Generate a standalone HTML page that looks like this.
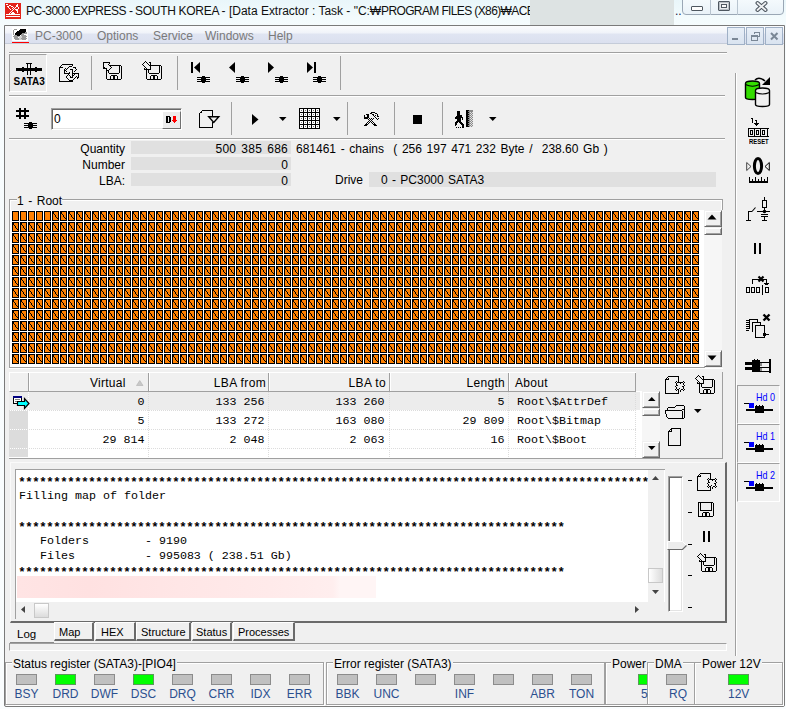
<!DOCTYPE html>
<html><head><meta charset="utf-8">
<style>
*{margin:0;padding:0;box-sizing:border-box}
html,body{width:786px;height:709px;overflow:hidden;background:#eaf6fa;font-family:"Liberation Sans",sans-serif;font-size:12px;color:#000}
.a{position:absolute}
.t{position:absolute;white-space:nowrap;line-height:1}
.hl{position:absolute;height:1px;background:#a0a0a0}
.vl{position:absolute;width:1px;background:#a0a0a0}
.wl{position:absolute;background:#fff}
.m{font-family:"Liberation Mono",monospace;font-size:11.67px;white-space:pre}
.ast{font:bold 12.5px "Liberation Sans",sans-serif;letter-spacing:2.14px;color:#000}
svg{position:absolute;overflow:visible}
.led{position:absolute;width:21px;height:11px;background:#c0c0c0;border:1px solid #8c8c8c}
.led.g{background:#00ff00;border-color:#5a9a5a}
.ll{position:absolute;color:#2b4f8f;white-space:nowrap;line-height:1;font-size:12px}
</style></head><body>
<!-- desktop/title -->
<div class="a" style="left:0;top:0;width:786px;height:709px;background:linear-gradient(#e9f6fa,#f3fbfd 18px,#f7fcfe 30px,#fafdfe)"></div>

<div class="t" style="left:26px;top:5px;color:#101010;letter-spacing:-0.49px">PC-3000 EXPRESS - </div>
<div class="t" style="left:135px;top:5px;color:#101010;letter-spacing:-0.29px">SOUTH KOREA - </div>
<div class="t" style="left:229px;top:5px;color:#101010;letter-spacing:-0.02px">[Data Extractor : Task - "C:&#8361;</div>
<div class="t" style="left:381px;top:5px;color:#101010;letter-spacing:-0.62px">PROGRAM FILES (X86)&#8361;ACE</div>
<div class="a" style="left:530px;top:0;width:144px;height:31px;background:#dde3e3"></div>
<div class="a" style="left:682px;top:-2px;width:102px;height:17px;border:1px solid #9aa7b5;border-radius:0 0 4px 4px;background:linear-gradient(#f5fafd,#e9f2f8)"></div>
<div class="vl" style="left:710px;top:0;height:15px;background:#b8c4cf"></div>
<div class="vl" style="left:737px;top:0;height:15px;background:#b8c4cf"></div>

<!-- MDI window -->
<div class="a" style="left:4px;top:25px;width:781px;height:682px;border:1px solid #7a7a7a;border-radius:0 0 2px 2px;background:#f0f0f0"></div>
<div class="a" style="left:5px;top:26px;width:779px;height:18px;background:linear-gradient(#fbfcfe 0,#f0f3f9 7px,#e0e5f2 8px,#dbe0ef 100%);border-bottom:1px solid #c5ccd9"></div>
<div class="t" style="left:35px;top:30px;color:#7a7a7a">PC-3000</div>
<div class="t" style="left:97px;top:30px;color:#7a7a7a">Options</div>
<div class="t" style="left:153px;top:30px;color:#7a7a7a">Service</div>
<div class="t" style="left:205px;top:30px;color:#7a7a7a">Windows</div>
<div class="t" style="left:268px;top:30px;color:#7a7a7a">Help</div>
<div class="a" style="left:727px;top:27px;width:18px;height:18px;border:1px solid #9fb0c6;background:linear-gradient(#e8eff8,#d9e3f0)"></div>
<div class="a" style="left:746px;top:27px;width:18px;height:18px;border:1px solid #9fb0c6;background:linear-gradient(#e8eff8,#d9e3f0)"></div>
<div class="a" style="left:765px;top:27px;width:18px;height:18px;border:1px solid #9fb0c6;background:linear-gradient(#e8eff8,#d9e3f0)"></div>

<!-- toolbar 1 -->
<div class="hl" style="left:9px;top:52px;width:718px"></div>
<div class="wl" style="left:9px;top:53px;width:718px;height:1px"></div>
<div class="a" style="left:9px;top:54px;width:38px;height:38px;border-left:1px solid #a0a0a0;border-top:1px solid #a0a0a0;border-right:1px solid #fff;border-bottom:1px solid #fff;background:#ebebeb"></div>
<div class="vl" style="left:91px;top:56px;height:34px"></div>
<div class="vl" style="left:177px;top:56px;height:34px"></div>
<div class="vl" style="left:340px;top:56px;height:34px"></div>
<div class="hl" style="left:9px;top:95px;width:716px"></div>
<div class="wl" style="left:9px;top:96px;width:716px;height:1px"></div>

<!-- toolbar 2 -->
<div class="a" style="left:51px;top:108px;width:131px;height:22px;border:1px solid #a0a0a0;border-right-color:#fff;border-bottom-color:#fff;box-shadow:inset 1px 1px 0 #696969,inset -1px -1px 0 #e3e3e3;background:#fff"></div>
<div class="t" style="left:54px;top:113px;color:#000">0</div>
<div class="a" style="left:162px;top:111px;width:19px;height:18px;border:1px solid #fff;border-right-color:#707070;border-bottom-color:#707070;background:#ececec"></div>
<div class="vl" style="left:231px;top:102px;height:33px"></div>
<div class="vl" style="left:347px;top:102px;height:33px"></div>
<div class="vl" style="left:394px;top:102px;height:33px"></div>
<div class="vl" style="left:442px;top:102px;height:33px"></div>
<div class="hl" style="left:9px;top:138px;width:716px"></div>
<div class="wl" style="left:9px;top:139px;width:716px;height:1px"></div>

<!-- info -->
<div class="a" style="left:131px;top:141px;width:160px;height:13px;background:#e0e0e0"></div>
<div class="a" style="left:131px;top:157px;width:160px;height:13px;background:#e0e0e0"></div>
<div class="a" style="left:131px;top:173px;width:160px;height:13px;background:#e0e0e0"></div>
<div class="t" style="right:661px;top:143px">Quantity</div>
<div class="t" style="right:661px;top:159px">Number</div>
<div class="t" style="right:661px;top:175px">LBA:</div>
<div class="t" style="right:498px;top:143px;word-spacing:1.5px;letter-spacing:0.25px">500 385 686</div>
<div class="t" style="right:498px;top:159px">0</div>
<div class="t" style="right:498px;top:175px">0</div>
<div class="t" style="left:296px;top:143px;word-spacing:1.3px">681461 - chains&nbsp; ( 256 197 471 232 Byte /&nbsp; 238.60 Gb )</div>
<div class="t" style="left:335px;top:174px">Drive</div>
<div class="a" style="left:369px;top:172px;width:347px;height:15px;background:#e0e0e0"></div>
<div class="t" style="left:381px;top:174px;word-spacing:1px">0 - PC3000 SATA3</div>

<!-- root group -->
<div class="hl" style="left:9px;top:199px;width:8px"></div>
<div class="hl" style="left:62px;top:199px;width:661px"></div>
<div class="wl" style="left:10px;top:200px;width:7px;height:1px"></div>
<div class="wl" style="left:62px;top:200px;width:660px;height:1px"></div>
<div class="vl" style="left:9px;top:199px;height:169px"></div>
<div class="wl" style="left:10px;top:200px;width:1px;height:167px"></div>
<div class="vl" style="left:722px;top:199px;height:11px"></div>
<div class="wl" style="left:721px;top:200px;width:1px;height:10px"></div>
<div class="hl" style="left:9px;top:367px;width:696px"></div>
<div class="wl" style="left:9px;top:368px;width:714px;height:1px"></div>
<div class="t" style="left:17px;top:195px;word-spacing:1.2px">1 - Root</div>
<div class="a" style="left:10px;top:210px;width:694px;height:157px;background:#fff"></div>
<svg style="left:12px;top:211px" width="688" height="154" shape-rendering="crispEdges">
<defs>
<pattern id="c" x="0" y="0" width="8" height="11" patternUnits="userSpaceOnUse">
<rect x="0" y="0" width="7" height="10" fill="#000"/>
<rect x="1" y="1" width="5" height="8" fill="#ff8000"/>
<rect x="1" y="1" width="1" height="2" fill="#000"/>
<rect x="2" y="3" width="1" height="1" fill="#000"/>
<rect x="3" y="4" width="1" height="2" fill="#000"/>
<rect x="4" y="6" width="1" height="1" fill="#000"/>
<rect x="5" y="7" width="1" height="1" fill="#000"/>
</pattern>
</defs>
<rect x="0" y="0" width="688" height="154" fill="url(#c)"/>
<rect x="1" y="1" width="5" height="8" fill="#ff8000"/>
<rect x="9" y="1" width="5" height="8" fill="#ff8000"/>
<rect x="17" y="1" width="5" height="8" fill="#ff8000"/>
<rect x="25" y="1" width="5" height="8" fill="#ff8000"/>
<rect x="33" y="1" width="5" height="8" fill="#ff8000"/>
</svg>
<!-- grid scrollbar -->
<div class="a" style="left:704px;top:210px;width:18px;height:157px;background:#f6f6f6"></div>
<div class="a" style="left:704px;top:210px;width:18px;height:17px;border:1px solid #f0f0f0;border-right-color:#696969;border-bottom-color:#696969;box-shadow:inset 1px 1px 0 #fff,inset -1px -1px 0 #a0a0a0;background:#f0f0f0"></div>
<div class="a" style="left:704px;top:227px;width:18px;height:8px;border:1px solid #f0f0f0;border-right-color:#696969;border-bottom-color:#696969;box-shadow:inset 1px 1px 0 #fff,inset -1px -1px 0 #a0a0a0;background:#f0f0f0"></div>
<div class="a" style="left:704px;top:350px;width:18px;height:17px;border:1px solid #f0f0f0;border-right-color:#696969;border-bottom-color:#696969;box-shadow:inset 1px 1px 0 #fff,inset -1px -1px 0 #a0a0a0;background:#f0f0f0"></div>

<!-- table -->
<div class="a" style="left:9px;top:391px;width:633px;height:67px;background:#fff"></div>
<div class="a" style="left:9px;top:372px;width:627px;height:20px;background:#f0f0f0;border-top:1px solid #fff;border-left:1px solid #fff;border-bottom:1px solid #a0a0a0"></div>
<div class="vl" style="left:28px;top:373px;height:18px"></div><div class="wl" style="left:29px;top:373px;width:1px;height:18px"></div>
<div class="vl" style="left:148px;top:373px;height:18px"></div><div class="wl" style="left:149px;top:373px;width:1px;height:18px"></div>
<div class="vl" style="left:268px;top:373px;height:18px"></div><div class="wl" style="left:269px;top:373px;width:1px;height:18px"></div>
<div class="vl" style="left:389px;top:373px;height:18px"></div><div class="wl" style="left:390px;top:373px;width:1px;height:18px"></div>
<div class="vl" style="left:508px;top:373px;height:18px"></div><div class="wl" style="left:509px;top:373px;width:1px;height:18px"></div>
<div class="vl" style="left:635px;top:373px;height:19px"></div>
<div class="t" style="left:90px;top:377px;letter-spacing:0.25px">Virtual</div>
<svg style="left:136px;top:380px" width="8" height="6"><path d="M0.5 5.5L3.75 0.5 7 5.5Z" fill="#c8c8c8" stroke="#b0b0b0" stroke-width="0.6"/></svg>
<div class="t" style="right:520px;top:377px;letter-spacing:0.35px">LBA from</div>
<div class="t" style="right:400px;top:377px;letter-spacing:0.35px">LBA to</div>
<div class="t" style="right:281px;top:377px;letter-spacing:0.3px">Length</div>
<div class="t" style="left:515px;top:377px;letter-spacing:0.3px">About</div>
<div class="a" style="left:9px;top:392px;width:631px;height:18px;background:#ececec"></div>
<div class="a" style="left:9px;top:411px;width:19px;height:18px;background:#dcdcdc"></div>
<div class="a" style="left:9px;top:430px;width:19px;height:18px;background:#dcdcdc"></div>
<div class="a" style="left:9px;top:449px;width:19px;height:8px;background:#dcdcdc"></div>
<div class="a" style="left:9px;top:410px;width:627px;height:1px;background:repeating-linear-gradient(90deg,#dcdcdc 0 1px,transparent 1px 2px)"></div>
<div class="a" style="left:9px;top:429px;width:627px;height:1px;background:repeating-linear-gradient(90deg,#dcdcdc 0 1px,transparent 1px 2px)"></div>
<div class="a" style="left:9px;top:448px;width:627px;height:1px;background:repeating-linear-gradient(90deg,#dcdcdc 0 1px,transparent 1px 2px)"></div>
<div class="a" style="left:148px;top:392px;width:1px;height:65px;background:repeating-linear-gradient(#dcdcdc 0 1px,transparent 1px 2px)"></div>
<div class="a" style="left:268px;top:392px;width:1px;height:65px;background:repeating-linear-gradient(#dcdcdc 0 1px,transparent 1px 2px)"></div>
<div class="a" style="left:389px;top:392px;width:1px;height:65px;background:repeating-linear-gradient(#dcdcdc 0 1px,transparent 1px 2px)"></div>
<div class="a" style="left:508px;top:392px;width:1px;height:65px;background:repeating-linear-gradient(#dcdcdc 0 1px,transparent 1px 2px)"></div>
<div class="a" style="left:635px;top:392px;width:1px;height:65px;background:repeating-linear-gradient(#dcdcdc 0 1px,transparent 1px 2px)"></div>
<div class="a" style="left:28px;top:392px;width:1px;height:65px;background:repeating-linear-gradient(#fff 0 1px,transparent 1px 2px)"></div>
<div class="hl" style="left:9px;top:458px;width:714px"></div><div class="vl" style="left:722px;top:372px;height:87px"></div>
<!-- row indicator -->
<svg style="left:13px;top:396px" width="17" height="13" shape-rendering="crispEdges">
<rect x="0" y="0" width="9" height="8" fill="#000"/>
<rect x="0" y="0" width="9" height="2" fill="#000080"/>
<rect x="1" y="2" width="7" height="5" fill="#fff"/>
<rect x="2" y="3" width="5" height="1" fill="#808080"/>
<rect x="2" y="5" width="3" height="1" fill="#808080"/>
<path d="M4.5 5.5H11.5V2.5L16 7.5 11.5 12.5V9.5H4.5Z" fill="#00ffff" stroke="#000" stroke-width="1.2" shape-rendering="auto"/>
</svg>
<!-- table rows -->
<div class="t m" style="right:641.5px;top:397px">0</div>
<div class="t m" style="right:521.5px;top:397px">133 256</div>
<div class="t m" style="right:401.5px;top:397px">133 260</div>
<div class="t m" style="right:281.5px;top:397px">5</div>
<div class="t m" style="left:517px;top:397px">Root\$AttrDef</div>
<div class="t m" style="right:641.5px;top:416px">5</div>
<div class="t m" style="right:521.5px;top:416px">133 272</div>
<div class="t m" style="right:401.5px;top:416px">163 080</div>
<div class="t m" style="right:281.5px;top:416px">29 809</div>
<div class="t m" style="left:517px;top:416px">Root\$Bitmap</div>
<div class="t m" style="right:641.5px;top:435px">29 814</div>
<div class="t m" style="right:521.5px;top:435px">2 048</div>
<div class="t m" style="right:401.5px;top:435px">2 063</div>
<div class="t m" style="right:281.5px;top:435px">16</div>
<div class="t m" style="left:517px;top:435px">Root\$Boot</div>
<!-- table scrollbar -->
<div class="a" style="left:642px;top:391px;width:18px;height:67px;background:#f6f6f6"></div>
<div class="a" style="left:642px;top:391px;width:18px;height:17px;border:1px solid #f0f0f0;border-right-color:#696969;border-bottom-color:#696969;box-shadow:inset 1px 1px 0 #fff,inset -1px -1px 0 #a0a0a0;background:#f0f0f0"></div>
<div class="a" style="left:642px;top:408px;width:18px;height:8px;border:1px solid #f0f0f0;border-right-color:#696969;border-bottom-color:#696969;box-shadow:inset 1px 1px 0 #fff,inset -1px -1px 0 #a0a0a0;background:#f0f0f0"></div>
<div class="a" style="left:642px;top:441px;width:18px;height:17px;border:1px solid #f0f0f0;border-right-color:#696969;border-bottom-color:#696969;box-shadow:inset 1px 1px 0 #fff,inset -1px -1px 0 #a0a0a0;background:#f0f0f0"></div>

<!-- log panel -->
<div class="a" style="left:10px;top:462px;width:717px;height:161px;border:1px solid #fafafa;border-right:2px solid #6a6a6a;border-bottom:2px solid #6a6a6a"></div>
<div class="a" style="left:15px;top:469px;width:650px;height:150px;border-left:1px solid #a0a0a0;border-top:1px solid #a0a0a0;background:#fff"></div>
<div class="a" style="left:17px;top:576px;width:359px;height:22px;background:linear-gradient(90deg,#ffe4e4 0,#ffe1e1 20%,#ffe6e6 45%,#ffeaea 70%,#ffeeee 88%,#fff5f5 90%,#fff5f5 100%)"></div>
<div class="a" style="left:16px;top:470px;width:632px;height:132px;overflow:hidden">
<div class="t ast" style="left:3.5px;top:5px">********************************************************************************************</div>
<div class="t m" style="left:3px;top:21px">Filling map of folder</div>
<div class="t ast" style="left:3.5px;top:50px">******************************************************************************</div>
<div class="t m" style="left:3px;top:66px">   Folders        - 9190</div>
<div class="t m" style="left:3px;top:81px">   Files          - 995083 ( 238.51 Gb)</div>
<div class="t ast" style="left:3.5px;top:95px">******************************************************************************</div>
</div>
<!-- log vscroll -->
<div class="a" style="left:648px;top:470px;width:16px;height:132px;background:#f0f0f0"></div>
<div class="a" style="left:648px;top:568px;width:15px;height:15px;border:1px solid #c8c8c8;background:linear-gradient(90deg,#fff,#dcdcdc)"></div>
<!-- log hscroll -->
<div class="a" style="left:16px;top:602px;width:632px;height:17px;background:#f0f0f0"></div>
<div class="a" style="left:34px;top:603px;width:15px;height:15px;border:1px solid #c8c8c8;background:linear-gradient(#fff,#dcdcdc)"></div>
<div class="a" style="left:648px;top:602px;width:17px;height:17px;background:#f0f0f0"></div>
<!-- slider -->
<div class="a" style="left:668px;top:476px;width:15px;height:136px;border:1px solid #a0a0a0;border-right-color:#fff;border-bottom-color:#fff;box-shadow:inset 1px 1px 0 #696969,inset -1px -1px 0 #e3e3e3;background:#fff"></div>

<!-- tabs -->
<div class="hl" style="left:10px;top:642px;width:44px;background:#8a8a8a"></div>
<div class="a" style="left:54px;top:622px;width:40px;height:19px;border:1px solid #fff;border-right:2px solid #6a6a6a;border-bottom:2px solid #6a6a6a;background:#f0f0f0"></div>
<div class="a" style="left:95px;top:622px;width:41px;height:19px;border:1px solid #fff;border-right:2px solid #6a6a6a;border-bottom:2px solid #6a6a6a;background:#f0f0f0"></div>
<div class="a" style="left:136px;top:622px;width:55px;height:19px;border:1px solid #fff;border-right:2px solid #6a6a6a;border-bottom:2px solid #6a6a6a;background:#f0f0f0"></div>
<div class="a" style="left:192px;top:622px;width:40px;height:19px;border:1px solid #fff;border-right:2px solid #6a6a6a;border-bottom:2px solid #6a6a6a;background:#f0f0f0"></div>
<div class="a" style="left:233px;top:622px;width:62px;height:19px;border:1px solid #fff;border-right:2px solid #6a6a6a;border-bottom:2px solid #6a6a6a;background:#f0f0f0"></div>
<div class="t" style="left:17px;top:629px;font-size:11.5px">Log</div>
<div class="t" style="left:59px;top:627px;font-size:11px">Map</div>
<div class="t" style="left:101px;top:627px;font-size:11px">HEX</div>
<div class="t" style="left:141px;top:627px;font-size:11px">Structure</div>
<div class="t" style="left:196px;top:627px;font-size:11px">Status</div>
<div class="t" style="left:238px;top:627px;font-size:11px">Processes</div>
<div class="a" style="left:9px;top:643px;width:718px;height:8px;border-top:1px solid #a0a0a0;border-left:1px solid #a0a0a0;border-bottom:1px solid #fff;border-right:1px solid #fff"></div>

<!-- right toolbar -->
<div class="vl" style="left:735px;top:73px;height:583px"></div>
<div class="wl" style="left:736px;top:73px;width:1px;height:583px"></div>
<div class="a" style="left:737px;top:385px;width:43px;height:39px;border:1px solid #a0a0a0;border-right-color:#fff;border-bottom-color:#fff"></div>
<div class="a" style="left:737px;top:424px;width:43px;height:39px;border:1px solid #a0a0a0;border-right-color:#fff;border-bottom-color:#fff"></div>
<div class="a" style="left:737px;top:463px;width:43px;height:39px;border:1px solid #a0a0a0;border-right-color:#fff;border-bottom-color:#fff"></div>
<div class="t" style="left:756px;top:392px;font-size:10.5px;transform:scaleX(0.86);transform-origin:0 0;color:#0000ff">Hd 0</div>
<div class="t" style="left:756px;top:431px;font-size:10.5px;transform:scaleX(0.86);transform-origin:0 0;color:#0000ff">Hd 1</div>
<div class="t" style="left:756px;top:470px;font-size:10.5px;transform:scaleX(0.86);transform-origin:0 0;color:#0000ff">Hd 2</div>

<!-- status bar -->

<div class="a" style="left:5px;top:662px;width:319px;height:43px;border:1px solid #a0a0a0;border-right-color:#a0a0a0;box-shadow:inset 1px 1px 0 #fff,1px 1px 0 #fff"></div>
<div class="a" style="left:12px;top:658px;height:12px;padding:0 1px;background:#f0f0f0;line-height:12px" ><span style="position:relative;top:0">Status register (SATA3)-[PIO4]</span></div>
<div class="a" style="left:326px;top:662px;width:279px;height:43px;border:1px solid #a0a0a0;box-shadow:inset 1px 1px 0 #fff,1px 1px 0 #fff"></div>
<div class="a" style="left:333px;top:658px;height:12px;padding:0 1px;background:#f0f0f0;line-height:12px">Error register (SATA3)</div>
<div class="a" style="left:605px;top:662px;width:43px;height:43px;border:1px solid #a0a0a0;box-shadow:inset 1px 1px 0 #fff,1px 1px 0 #fff"></div>
<div class="a" style="left:647px;top:662px;width:48px;height:43px;border:1px solid #a0a0a0;box-shadow:inset 1px 1px 0 #fff,1px 1px 0 #fff"></div>
<div class="a" style="left:694px;top:662px;width:89px;height:43px;border:1px solid #a0a0a0;box-shadow:inset 1px 1px 0 #fff,1px 1px 0 #fff"></div>
<div class="a" style="left:611px;top:658px;height:12px;padding:0 1px;background:#f0f0f0;line-height:12px">Power</div>
<div class="a" style="left:654px;top:658px;height:12px;padding:0 1px;background:#f0f0f0;line-height:12px">DMA</div>
<div class="a" style="left:701px;top:658px;height:12px;padding:0 1px;background:#f0f0f0;line-height:12px">Power 12V</div>
<div class="led" style="left:16px;top:674px"></div>
<div class="ll" style="left:6px;top:688px;width:41px;text-align:center">BSY</div>
<div class="led g" style="left:55px;top:674px"></div>
<div class="ll" style="left:45px;top:688px;width:41px;text-align:center">DRD</div>
<div class="led" style="left:94px;top:674px"></div>
<div class="ll" style="left:84px;top:688px;width:41px;text-align:center">DWF</div>
<div class="led g" style="left:133px;top:674px"></div>
<div class="ll" style="left:123px;top:688px;width:41px;text-align:center">DSC</div>
<div class="led" style="left:172px;top:674px"></div>
<div class="ll" style="left:162px;top:688px;width:41px;text-align:center">DRQ</div>
<div class="led" style="left:211px;top:674px"></div>
<div class="ll" style="left:201px;top:688px;width:41px;text-align:center">CRR</div>
<div class="led" style="left:250px;top:674px"></div>
<div class="ll" style="left:240px;top:688px;width:41px;text-align:center">IDX</div>
<div class="led" style="left:289px;top:674px"></div>
<div class="ll" style="left:279px;top:688px;width:41px;text-align:center">ERR</div>
<div class="led" style="left:337px;top:674px"></div>
<div class="ll" style="left:327px;top:688px;width:41px;text-align:center">BBK</div>
<div class="led" style="left:376px;top:674px"></div>
<div class="ll" style="left:366px;top:688px;width:41px;text-align:center">UNC</div>
<div class="led" style="left:415px;top:674px"></div>
<div class="led" style="left:454px;top:674px"></div>
<div class="ll" style="left:444px;top:688px;width:41px;text-align:center">INF</div>
<div class="led" style="left:493px;top:674px"></div>
<div class="led" style="left:532px;top:674px"></div>
<div class="ll" style="left:522px;top:688px;width:41px;text-align:center">ABR</div>
<div class="led" style="left:571px;top:674px"></div>
<div class="ll" style="left:561px;top:688px;width:41px;text-align:center">TON</div>
<div class="led g" style="left:638px;top:674px;width:9px;border-right:none"></div>
<div class="ll" style="left:641px;top:688px">5</div>
<div class="led" style="left:666px;top:674px"></div>
<div class="ll" style="left:669px;top:688px">RQ</div>
<div class="led g" style="left:728px;top:674px"></div>
<div class="ll" style="left:728px;top:688px">12V</div>

<!-- ===== ICONS ===== -->
<!-- title icon -->
<svg style="left:5px;top:3px" width="16" height="16" shape-rendering="crispEdges"><rect width="16" height="16" fill="#e3241b"/><path d="M1 1h2v1h-2zM12 1h1v1h-1zM4 2h2v1h-2zM11 2h2v1h-2zM2 3h2v1h-2zM6 3h2v1h-2zM11 3h2v1h-2zM3 4h1v1h-1zM8 4h1v1h-1zM10 4h1v1h-1zM13 4h1v1h-1zM4 5h1v1h-1zM7 5h1v1h-1zM9 5h1v1h-1zM13 5h1v1h-1zM5 6h1v1h-1zM8 6h1v1h-1zM10 6h3v1h-3zM7 7h1v1h-1zM11 7h2v1h-2zM6 8h1v1h-1zM12 8h1v1h-1zM5 9h1v1h-1zM7 9h2v1h-2zM12 9h1v1h-1zM4 10h1v1h-1zM6 10h4v1h-4zM1 11h14v1h-14zM1 13h14v1h-14z" fill="#fff"/></svg>
<!-- menu icon -->
<svg style="left:12px;top:27px" width="17" height="17" shape-rendering="crispEdges"><rect x="0" y="0" width="16" height="14" fill="#fff"/><path d="M2 2h3v1h-3zM1 3h1v1h-1zM1 4h1v1h-1zM1 5h1v1h-1zM13 5h2v1h-2zM1 6h1v1h-1zM10 6h5v1h-5zM1 7h1v1h-1zM9 7h3v1h-3zM2 8h3v1h-3zM9 8h5v1h-5zM1 9h6v1h-6zM10 9h5v1h-5zM2 10h4v1h-4zM10 10h4v1h-4zM2 11h5v1h-5zM9 11h6v1h-6zM3 12h4v1h-4zM10 12h4v1h-4z" fill="#9a9a9a"/><path d="M7 9h3v1h-3zM7 10h3v1h-3zM7 11h2v1h-2zM7 12h3v1h-3z" fill="#d0d0d0"/><path d="M8 2h6v1h-6zM7 3h7v1h-7zM5 4h9v1h-9zM4 5h9v1h-9zM3 6h7v1h-7zM3 7h6v1h-6zM5 8h3v1h-3z" fill="#000"/><rect x="0" y="15" width="17" height="1" fill="#f00"/></svg>
<!-- caption buttons glyphs -->
<div class="a" style="left:691px;top:6px;width:12px;height:5px;border:1px solid #4e5760;border-radius:1px;background:#fdfdfd"></div>
<div class="a" style="left:718px;top:1px;width:12px;height:10px;border:1px solid #4e5760;border-radius:1px;background:#e8eaec;box-shadow:inset 0 0 0 1px #b8bec4"></div>
<div class="a" style="left:721px;top:4px;width:6px;height:4px;border:1px solid #4e5760;background:#fafafa"></div>
<svg style="left:755px;top:1px" width="13" height="11"><path d="M2.5 2L10.5 9M10.5 2L2.5 9" stroke="#4e5760" stroke-width="4" stroke-linecap="round"/><path d="M2.5 2L10.5 9M10.5 2L2.5 9" stroke="#eef0f2" stroke-width="1.8" stroke-linecap="round"/></svg>
<div class="t" style="left:675px;top:5px;font-size:12px;color:#224">..</div>
<!-- MDI glyphs -->
<div class="a" style="left:732px;top:38px;width:6px;height:2px;background:#7a8796"></div>
<svg style="left:746px;top:27px" width="18" height="18" shape-rendering="crispEdges"><path d="M8 5h6v1h-6zM8 6h1v1h-1zM13 6h1v4h-1zM12 9h1v1h-1zM5 8h7v2H5zM5 10h1v4H5zM11 10h1v4h-1zM5 13h7v1H5z" fill="#7a8796"/></svg>
<svg style="left:765px;top:27px" width="18" height="18"><path d="M6 6L12.5 12.5M12.5 6L6 12.5" stroke="#7a8796" stroke-width="2"/></svg>

<!-- SATA3 -->
<svg style="left:9px;top:54px" width="38" height="38" shape-rendering="crispEdges">
<rect x="7" y="14" width="26" height="3" fill="#000"/>
<rect x="13" y="13" width="2" height="5" fill="#000"/>
<rect x="26" y="13" width="2" height="5" fill="#000"/>
<rect x="18" y="9" width="1" height="12" fill="#000"/>
<rect x="21" y="9" width="1" height="12" fill="#000"/>
<rect x="17" y="9" width="6" height="1" fill="#000"/>
</svg>
<div class="t" style="left:13.5px;top:77px;font-size:10px;font-weight:bold;letter-spacing:0px;color:#000">SATA3</div>
<!-- refresh doc -->
<svg style="left:57px;top:61px" width="24" height="24" shape-rendering="crispEdges"><path d="M5 3h11v1h-11zM4 4h1v1h-1zM15 4h1v1h-1zM3 5h1v1h-1zM12 5h3v1h-3zM2 6h4v1h-4zM11 6h1v1h-1zM16 6h3v1h-3zM2 7h1v1h-1zM8 7h1v1h-1zM10 7h1v1h-1zM18 7h1v1h-1zM2 8h1v1h-1zM7 8h1v1h-1zM9 8h1v1h-1zM13 8h3v1h-3zM19 8h1v1h-1zM2 9h1v1h-1zM7 9h2v1h-2zM15 9h1v1h-1zM18 9h1v1h-1zM2 10h1v1h-1zM7 10h1v1h-1zM9 10h1v1h-1zM15 10h1v1h-1zM17 10h1v1h-1zM2 11h1v1h-1zM7 11h1v1h-1zM12 11h1v1h-1zM15 11h1v1h-1zM2 12h1v1h-1zM7 12h6v1h-6zM15 12h7v1h-7zM2 13h1v1h-1zM11 13h1v1h-1zM15 13h1v1h-1zM17 13h1v1h-1zM21 13h1v1h-1zM2 14h1v1h-1zM10 14h1v1h-1zM12 14h1v1h-1zM15 14h2v1h-2zM21 14h1v1h-1zM2 15h1v1h-1zM9 15h1v1h-1zM13 15h1v1h-1zM15 15h1v1h-1zM19 15h1v1h-1zM21 15h1v1h-1zM2 16h1v1h-1zM9 16h1v1h-1zM13 16h3v1h-3zM18 16h1v1h-1zM20 16h2v1h-2zM2 17h1v1h-1zM10 17h1v1h-1zM17 17h1v1h-1zM20 17h1v1h-1zM2 18h1v1h-1zM11 18h1v1h-1zM16 18h1v1h-1zM2 19h1v1h-1zM12 19h4v1h-4zM2 20h14v1h-14z" fill="#000"/></svg>
<!-- save1 -->
<svg style="left:100px;top:60px" width="26" height="22" shape-rendering="crispEdges"><path d="M9 5h12v1h-12zM3 5h1v1h-1zM9 5h1v1h-1zM21 6h1v1h-1zM19 6h1v1h-1zM3 6h1v1h-1zM10 6h1v1h-1zM21 7h1v1h-1zM19 7h1v1h-1zM3 7h1v1h-1zM11 7h1v1h-1zM4 7h1v1h-1zM21 8h1v1h-1zM6 8h1v1h-1zM19 8h1v1h-1zM3 8h1v1h-1zM4 8h1v1h-1zM5 8h1v1h-1zM10 8h1v1h-1zM21 9h1v1h-1zM6 9h1v1h-1zM19 9h1v1h-1zM6 9h1v1h-1zM9 9h1v1h-1zM21 10h1v1h-1zM6 10h1v1h-1zM19 10h1v1h-1zM8 10h1v1h-1zM7 10h1v1h-1zM8 10h1v1h-1zM21 11h1v1h-1zM6 11h1v1h-1zM19 11h1v1h-1zM8 11h1v1h-1zM21 12h1v1h-1zM6 12h1v1h-1zM19 12h1v1h-1zM8 12h1v1h-1zM21 13h1v1h-1zM6 13h1v1h-1zM9 13h10v1h-10zM21 14h1v1h-1zM6 14h1v1h-1zM21 15h1v1h-1zM6 15h1v1h-1zM11 15h6v1h-6zM21 16h1v1h-1zM6 16h1v1h-1zM10 16h1v1h-1zM13 16h2v1h-2zM17 16h1v1h-1zM21 17h1v1h-1zM6 17h1v1h-1zM10 17h1v1h-1zM13 17h2v1h-2zM17 17h1v1h-1zM21 18h1v1h-1zM6 18h1v1h-1zM10 18h1v1h-1zM13 18h2v1h-2zM17 18h1v1h-1zM7 19h14v1h-14zM3 2h7v1h-7zM3 3h1v1h-1zM9 3h1v1h-1zM3 4h1v1h-1zM8 4h1v1h-1z" fill="#000"/></svg>
<!-- save2 -->
<svg style="left:140px;top:60px" width="26" height="22" shape-rendering="crispEdges"><path d="M10 5h11v1h-11zM10 5h1v1h-1zM9 5h1v1h-1zM3 5h1v1h-1zM21 6h1v1h-1zM19 6h1v1h-1zM10 6h1v1h-1zM4 6h1v1h-1zM21 7h1v1h-1zM19 7h1v1h-1zM10 7h1v1h-1zM5 7h1v1h-1zM21 8h1v1h-1zM19 8h1v1h-1zM10 8h1v1h-1zM4 8h1v1h-1zM6 8h1v1h-1zM21 9h1v1h-1zM19 9h1v1h-1zM10 9h1v1h-1zM4 9h7v1h-7zM21 10h1v1h-1zM6 10h1v1h-1zM19 10h1v1h-1zM8 10h1v1h-1zM21 11h1v1h-1zM6 11h1v1h-1zM19 11h1v1h-1zM8 11h1v1h-1zM21 12h1v1h-1zM6 12h1v1h-1zM19 12h1v1h-1zM8 12h1v1h-1zM21 13h1v1h-1zM6 13h1v1h-1zM9 13h10v1h-10zM21 14h1v1h-1zM6 14h1v1h-1zM21 15h1v1h-1zM6 15h1v1h-1zM11 15h6v1h-6zM21 16h1v1h-1zM6 16h1v1h-1zM10 16h1v1h-1zM13 16h2v1h-2zM17 16h1v1h-1zM21 17h1v1h-1zM6 17h1v1h-1zM10 17h1v1h-1zM13 17h2v1h-2zM17 17h1v1h-1zM21 18h1v1h-1zM6 18h1v1h-1zM10 18h1v1h-1zM13 18h2v1h-2zM17 18h1v1h-1zM7 19h14v1h-14zM10 3h1v1h-1zM7 3h1v1h-1zM3 3h1v1h-1zM10 4h1v1h-1zM8 4h1v1h-1zM2 4h1v1h-1zM9 2h2v1h-2zM6 2h1v1h-1zM4 2h1v1h-1zM5 1h1v1h-1z" fill="#000"/></svg>
<svg style="left:191px;top:62px" width="10" height="11"><rect x="0" y="0" width="2" height="11" fill="#000"/><path d="M9 0V11L3 5.5Z" fill="#000"/></svg>
<svg style="left:197px;top:76px" width="14" height="8" shape-rendering="crispEdges"><path d="M0 1h13v1H0zM0 3h13v1H0zM0 5h13v1H0zM5 0h3v7H5zM4 1h5v5H4z" fill="#000"/></svg>
<svg style="left:228px;top:62px" width="8" height="11"><path d="M7 0V11L1 5.5Z" fill="#000"/></svg>
<svg style="left:236px;top:76px" width="14" height="8" shape-rendering="crispEdges"><path d="M0 1h13v1H0zM0 3h13v1H0zM0 5h13v1H0zM5 0h3v7H5zM4 1h5v5H4z" fill="#000"/></svg>
<svg style="left:268px;top:62px" width="8" height="11"><path d="M0 0V11L6 5.5Z" fill="#000"/></svg>
<svg style="left:275px;top:76px" width="14" height="8" shape-rendering="crispEdges"><path d="M0 1h13v1H0zM0 3h13v1H0zM0 5h13v1H0zM5 0h3v7H5zM4 1h5v5H4z" fill="#000"/></svg>
<svg style="left:307px;top:62px" width="10" height="11"><path d="M0 0V11L6 5.5Z" fill="#000"/><rect x="7" y="0" width="2" height="11" fill="#000"/></svg>
<svg style="left:313px;top:76px" width="14" height="8" shape-rendering="crispEdges"><path d="M0 1h13v1H0zM0 3h13v1H0zM0 5h13v1H0zM5 0h3v7H5zM4 1h5v5H4z" fill="#000"/></svg>

<!-- # icon -->
<svg style="left:16px;top:108px" width="13" height="11" shape-rendering="crispEdges"><path d="M3 0h2v11H3zM8 0h2v11H8zM0 2h13v2H0zM0 7h13v2H0z" fill="#000"/></svg>
<svg style="left:24px;top:122px" width="14" height="8" shape-rendering="crispEdges"><path d="M0 1h13v1H0zM0 3h13v1H0zM0 5h13v1H0zM5 0h3v7H5zM4 1h5v5H4z" fill="#000"/></svg>

<!-- D arrow -->
<svg style="left:166px;top:116px" width="12" height="8" shape-rendering="crispEdges"><path d="M0 0h4v1H0zM0 6h4v1H0zM0 1h2v5H0zM3 1h2v5H3z" fill="#000"/><path d="M7 0h3v4H7zM6 4h5v1H6zM7 5h3v1H7zM8 6h1v1H8z" fill="#f00"/></svg>
<!-- filter doc -->
<svg style="left:199px;top:110px" width="21" height="18" shape-rendering="crispEdges">
<path d="M3 0h11v1H3zM2 1h1v1H2zM1 2h1v1H1zM0 3h1v15H0zM0 17h14v1H0zM13 0h1v7h-1zM13 12h1v6h-1zM2 2h1v1H2z" fill="#000"/>
</svg>
<svg style="left:208px;top:116px" width="12" height="8"><path d="M0.7 0.7H10.8L5.75 6.5Z" fill="none" stroke="#000" stroke-width="1.4"/></svg>
<!-- play & dropdowns -->
<svg style="left:252px;top:114px" width="7" height="11"><path d="M0 0V11L6.5 5.5Z" fill="#000"/></svg>
<svg style="left:279px;top:117px" width="8" height="4"><path d="M0 0H7.5L3.75 4Z" fill="#000"/></svg>
<svg style="left:333px;top:117px" width="8" height="4"><path d="M0 0H7.5L3.75 4Z" fill="#000"/></svg>
<svg style="left:489px;top:117px" width="8" height="4"><path d="M0 0H7.5L3.75 4Z" fill="#000"/></svg>
<!-- grid icon -->
<svg style="left:299px;top:108px" width="21" height="21" shape-rendering="crispEdges">
<rect width="21" height="21" fill="#000"/>
<rect x="1" y="1" width="3" height="3" fill="#fff"/><rect x="2" y="2" width="1" height="1" fill="#777"/><rect x="1" y="5" width="3" height="3" fill="#fff"/><rect x="2" y="6" width="1" height="1" fill="#777"/><rect x="1" y="9" width="3" height="3" fill="#fff"/><rect x="2" y="10" width="1" height="1" fill="#777"/><rect x="1" y="13" width="3" height="3" fill="#fff"/><rect x="2" y="14" width="1" height="1" fill="#777"/><rect x="1" y="17" width="3" height="3" fill="#fff"/><rect x="2" y="18" width="1" height="1" fill="#777"/><rect x="5" y="1" width="3" height="3" fill="#fff"/><rect x="6" y="2" width="1" height="1" fill="#777"/><rect x="5" y="5" width="3" height="3" fill="#fff"/><rect x="6" y="6" width="1" height="1" fill="#777"/><rect x="5" y="9" width="3" height="3" fill="#fff"/><rect x="6" y="10" width="1" height="1" fill="#777"/><rect x="5" y="13" width="3" height="3" fill="#fff"/><rect x="6" y="14" width="1" height="1" fill="#777"/><rect x="5" y="17" width="3" height="3" fill="#fff"/><rect x="6" y="18" width="1" height="1" fill="#777"/><rect x="9" y="1" width="3" height="3" fill="#fff"/><rect x="10" y="2" width="1" height="1" fill="#777"/><rect x="9" y="5" width="3" height="3" fill="#fff"/><rect x="10" y="6" width="1" height="1" fill="#777"/><rect x="9" y="9" width="3" height="3" fill="#fff"/><rect x="10" y="10" width="1" height="1" fill="#777"/><rect x="9" y="13" width="3" height="3" fill="#fff"/><rect x="10" y="14" width="1" height="1" fill="#777"/><rect x="9" y="17" width="3" height="3" fill="#fff"/><rect x="10" y="18" width="1" height="1" fill="#777"/><rect x="13" y="1" width="3" height="3" fill="#fff"/><rect x="14" y="2" width="1" height="1" fill="#777"/><rect x="13" y="5" width="3" height="3" fill="#fff"/><rect x="14" y="6" width="1" height="1" fill="#777"/><rect x="13" y="9" width="3" height="3" fill="#fff"/><rect x="14" y="10" width="1" height="1" fill="#777"/><rect x="13" y="13" width="3" height="3" fill="#fff"/><rect x="14" y="14" width="1" height="1" fill="#777"/><rect x="13" y="17" width="3" height="3" fill="#fff"/><rect x="14" y="18" width="1" height="1" fill="#777"/><rect x="17" y="1" width="3" height="3" fill="#fff"/><rect x="18" y="2" width="1" height="1" fill="#777"/><rect x="17" y="5" width="3" height="3" fill="#fff"/><rect x="18" y="6" width="1" height="1" fill="#777"/><rect x="17" y="9" width="3" height="3" fill="#fff"/><rect x="18" y="10" width="1" height="1" fill="#777"/><rect x="17" y="13" width="3" height="3" fill="#fff"/><rect x="18" y="14" width="1" height="1" fill="#777"/><rect x="17" y="17" width="3" height="3" fill="#fff"/><rect x="18" y="18" width="1" height="1" fill="#777"/></svg>

<!-- tools -->
<svg style="left:362px;top:110px" width="20" height="18" shape-rendering="crispEdges"><path d="M2 5h1v1h-1zM2 6h1v1h-1zM2 7h1v1h-1zM2 8h1v1h-1zM2 15h1v1h-1zM3 7h1v1h-1zM3 8h1v1h-1zM3 14h1v1h-1zM3 15h1v1h-1zM4 4h1v1h-1zM4 7h1v1h-1zM4 8h1v1h-1zM4 13h1v1h-1zM4 14h1v1h-1zM4 15h1v1h-1zM5 4h1v1h-1zM5 5h1v1h-1zM5 6h1v1h-1zM5 7h1v1h-1zM5 8h1v1h-1zM5 12h1v1h-1zM5 14h1v1h-1zM6 4h1v1h-1zM6 5h1v1h-1zM6 6h1v1h-1zM6 7h1v1h-1zM6 9h1v1h-1zM6 11h1v1h-1zM6 13h1v1h-1zM7 8h1v1h-1zM7 10h1v1h-1zM7 12h1v1h-1zM8 3h1v1h-1zM8 9h1v1h-1zM8 11h1v1h-1zM9 2h1v1h-1zM9 3h1v1h-1zM9 8h1v1h-1zM9 10h1v1h-1zM9 12h1v1h-1zM10 2h1v1h-1zM10 4h1v1h-1zM10 9h1v1h-1zM10 11h1v1h-1zM10 13h1v1h-1zM11 2h1v1h-1zM11 4h1v1h-1zM11 5h1v1h-1zM11 8h1v1h-1zM11 12h1v1h-1zM11 14h1v1h-1zM12 2h1v1h-1zM12 6h1v1h-1zM12 13h1v1h-1zM12 14h1v1h-1zM12 15h1v1h-1zM13 3h1v1h-1zM13 5h1v1h-1zM13 7h1v1h-1zM13 14h1v1h-1zM13 15h1v1h-1zM14 3h1v1h-1zM14 8h1v1h-1zM14 15h1v1h-1zM15 4h1v1h-1zM15 5h1v1h-1zM15 6h1v1h-1zM15 9h1v1h-1zM16 6h1v1h-1zM16 8h1v1h-1z" fill="#000"/></svg>
<!-- stop -->
<div class="a" style="left:413px;top:115px;width:9px;height:9px;background:#000"></div>
<!-- walk -->
<svg style="left:452px;top:108px" width="24" height="22" shape-rendering="crispEdges"><path d="M16 3h1v1h-1zM16 5h1v1h-1zM16 7h1v1h-1zM16 9h1v1h-1zM16 11h1v1h-1zM16 13h1v1h-1zM16 15h1v1h-1zM16 17h1v1h-1zM17 2h1v1h-1zM17 3h1v1h-1zM17 4h1v1h-1zM17 5h1v1h-1zM17 6h1v1h-1zM17 7h1v1h-1zM17 8h1v1h-1zM17 9h1v1h-1zM17 10h1v1h-1zM17 11h1v1h-1zM17 12h1v1h-1zM17 13h1v1h-1zM17 14h1v1h-1zM17 15h1v1h-1zM17 16h1v1h-1zM17 17h1v1h-1zM17 18h1v1h-1zM18 2h1v1h-1zM18 3h1v1h-1zM18 4h1v1h-1zM18 5h1v1h-1zM18 6h1v1h-1zM18 7h1v1h-1zM18 8h1v1h-1zM18 9h1v1h-1zM18 10h1v1h-1zM18 11h1v1h-1zM18 12h1v1h-1zM18 13h1v1h-1zM18 14h1v1h-1zM18 15h1v1h-1zM18 16h1v1h-1zM18 17h1v1h-1zM18 18h1v1h-1zM19 2h1v1h-1zM19 3h1v1h-1zM19 4h1v1h-1zM19 5h1v1h-1zM19 6h1v1h-1zM19 7h1v1h-1zM19 8h1v1h-1zM19 9h1v1h-1zM19 10h1v1h-1zM19 11h1v1h-1zM19 12h1v1h-1zM19 13h1v1h-1zM19 14h1v1h-1zM19 15h1v1h-1zM19 16h1v1h-1zM19 17h1v1h-1zM19 18h1v1h-1zM20 2h1v1h-1zM20 3h1v1h-1zM20 4h1v1h-1zM20 5h1v1h-1zM20 6h1v1h-1zM20 7h1v1h-1zM20 8h1v1h-1zM20 9h1v1h-1zM20 10h1v1h-1zM20 11h1v1h-1zM20 12h1v1h-1zM20 13h1v1h-1zM20 14h1v1h-1zM20 15h1v1h-1zM20 16h1v1h-1zM20 17h1v1h-1zM20 18h1v1h-1z" fill="#8a8a8a"/><path d="M18 4h1v1h-1zM18 6h1v1h-1zM18 8h1v1h-1zM18 10h1v1h-1zM18 12h1v1h-1zM18 14h1v1h-1zM18 16h1v1h-1zM18 18h1v1h-1zM19 5h1v1h-1zM19 7h1v1h-1zM19 9h1v1h-1zM19 11h1v1h-1zM19 13h1v1h-1zM19 15h1v1h-1zM19 17h1v1h-1zM20 4h1v1h-1zM20 6h1v1h-1zM20 8h1v1h-1zM20 10h1v1h-1zM20 12h1v1h-1zM20 14h1v1h-1zM20 16h1v1h-1zM20 18h1v1h-1z" fill="#e0e0e0"/><path d="M3 9h1v1h-1zM3 10h1v1h-1zM3 14h1v1h-1zM3 15h1v1h-1zM3 16h1v1h-1zM3 17h1v1h-1zM4 8h1v1h-1zM4 9h1v1h-1zM4 10h1v1h-1zM4 13h1v1h-1zM4 14h1v1h-1zM4 15h1v1h-1zM4 16h1v1h-1zM4 19h1v1h-1zM5 3h1v1h-1zM5 4h1v1h-1zM5 5h1v1h-1zM5 6h1v1h-1zM5 7h1v1h-1zM5 8h1v1h-1zM5 9h1v1h-1zM5 10h1v1h-1zM5 11h1v1h-1zM5 12h1v1h-1zM5 13h1v1h-1zM5 14h1v1h-1zM6 3h1v1h-1zM6 4h1v1h-1zM6 5h1v1h-1zM6 6h1v1h-1zM6 7h1v1h-1zM6 8h1v1h-1zM6 9h1v1h-1zM6 10h1v1h-1zM6 11h1v1h-1zM6 12h1v1h-1zM6 13h1v1h-1zM6 19h1v1h-1zM7 3h1v1h-1zM7 4h1v1h-1zM7 5h1v1h-1zM7 6h1v1h-1zM7 7h1v1h-1zM7 8h1v1h-1zM7 9h1v1h-1zM7 10h1v1h-1zM7 11h1v1h-1zM7 12h1v1h-1zM7 13h1v1h-1zM7 14h1v1h-1zM8 7h1v1h-1zM8 8h1v1h-1zM8 9h1v1h-1zM8 10h1v1h-1zM8 11h1v1h-1zM8 12h1v1h-1zM8 13h1v1h-1zM8 14h1v1h-1zM8 15h1v1h-1zM8 19h1v1h-1zM9 7h1v1h-1zM9 8h1v1h-1zM9 9h1v1h-1zM9 14h1v1h-1zM9 15h1v1h-1zM9 16h1v1h-1zM10 9h1v1h-1zM10 10h1v1h-1zM10 11h1v1h-1zM10 15h1v1h-1zM10 16h1v1h-1zM10 17h1v1h-1zM10 18h1v1h-1zM10 19h1v1h-1zM11 16h1v1h-1zM11 17h1v1h-1zM11 18h1v1h-1zM11 19h1v1h-1zM14 2h1v1h-1zM14 3h1v1h-1zM14 4h1v1h-1zM14 5h1v1h-1zM14 6h1v1h-1zM14 7h1v1h-1zM14 8h1v1h-1zM14 9h1v1h-1zM14 10h1v1h-1zM14 11h1v1h-1zM14 12h1v1h-1zM14 13h1v1h-1zM14 14h1v1h-1zM14 15h1v1h-1zM14 16h1v1h-1zM14 17h1v1h-1zM14 18h1v1h-1zM15 2h1v1h-1zM15 3h1v1h-1zM15 4h1v1h-1zM15 5h1v1h-1zM15 6h1v1h-1zM15 7h1v1h-1zM15 8h1v1h-1zM15 9h1v1h-1zM15 10h1v1h-1zM15 11h1v1h-1zM15 12h1v1h-1zM15 13h1v1h-1zM15 14h1v1h-1zM15 15h1v1h-1zM15 16h1v1h-1zM15 17h1v1h-1zM15 18h1v1h-1zM16 2h1v1h-1zM16 4h1v1h-1zM16 6h1v1h-1zM16 8h1v1h-1zM16 10h1v1h-1zM16 12h1v1h-1zM16 14h1v1h-1zM16 16h1v1h-1zM16 18h1v1h-1z" fill="#000"/></svg>

<!-- right toolbar icons -->
<svg style="left:744px;top:76px" width="28" height="32">
<path d="M1.5 7.5Q1.5 5 8.5 5 15.5 5 15.5 7.5V21.5Q15.5 23.5 8.5 23.5 1.5 23.5 1.5 21.5Z" fill="#33dd00" stroke="#000" stroke-width="1.4"/>
<path d="M1.5 8.5Q8.5 12 15.5 8.5" fill="none" stroke="#000" stroke-width="1.2"/>
<path d="M11.5 14.5Q11.5 12 18.5 12 25.5 12 25.5 14.5V28.5Q25.5 30.5 18.5 30.5 11.5 30.5 11.5 28.5Z" fill="#f0f0f0" stroke="#000" stroke-width="1.4"/>
<path d="M11.5 16.5Q18.5 19.5 25.5 16.5" fill="none" stroke="#000" stroke-width="1.2"/>
<path d="M11 4Q15 0 21 5" fill="none" stroke="#000" stroke-width="1.6"/>
<path d="M26 1V9H18Z" fill="#000"/>
</svg>
<!-- RESET -->
<svg style="left:747px;top:117px" width="24" height="20" shape-rendering="crispEdges">
<path d="M4 1h2v5H5V2H4z" fill="#000"/>
<path d="M8 3h2v5H9V4H8zM7 6h5v1H7zM8 7h3v1H8zM9 8h1v1H9z" fill="#000"/>
<path d="M1 11h21v1H1zM1 11h1v9H1zM1 19h21v1H1zM7 11h1v9H7zM13 11h1v9h-1zM20 11h1v9h-1z" fill="#000"/>
<path d="M3 13h1v5H3zM5 13h1v5H5zM4 13h1v1H4zM4 17h1v1H4zM9 13h1v5H9zM11 13h1v5h-1zM10 13h1v1h-1zM10 17h1v1h-1zM15 13h1v5h-1zM17 13h1v5h-1zM16 13h1v1h-1zM16 17h1v1h-1z" fill="#000"/>
</svg>
<div class="t" style="left:749px;top:137px;font:bold 7.4px 'Liberation Sans';letter-spacing:0px;transform:scaleX(0.8);transform-origin:0 0">RESET</div>
<!-- zero -->
<svg style="left:746px;top:156px" width="25" height="28">
<path d="M0.7 6.5V14.5L5 10.5Z" fill="none" stroke="#444" stroke-width="1"/>
<path d="M23.3 6.5V14.5L19 10.5Z" fill="none" stroke="#000" stroke-width="1"/>
<ellipse cx="12" cy="10" rx="3.6" ry="7.5" fill="none" stroke="#000" stroke-width="3"/>
<path d="M3 26.3H22" stroke="#000" stroke-width="2" shape-rendering="crispEdges"/>
<path d="M3.5 21V26M6.5 23V26M9.5 21V26M12.5 23V26M15.5 21V26M18.5 23V26M21.5 21V26" stroke="#000" stroke-width="1" shape-rendering="crispEdges"/>
</svg>
<!-- switch -->
<svg style="left:745px;top:196px" width="26" height="26" shape-rendering="crispEdges">
<path d="M19 1h1v3h-1zM17 4h5v1h-5zM17 4h1v8h-1zM21 4h1v8h-1zM17 11h5v1h-5zM19 12h1v3h-1z" fill="#000"/>
<path d="M12 15h13v1H12z" fill="#000"/>
<circle cx="19.5" cy="15.5" r="1.8" fill="#000" shape-rendering="auto"/>
<path d="M16 18h7v1h-7zM16 20h7v1h-7zM19 21h1v3h-1zM17 24h5v1h-5z" fill="#000"/>
<path d="M3 15h4v1H3zM3 15h1v9H3zM1 24h5v1H1z" fill="#000"/>
<path d="M7 15.5L10.5 11.5" stroke="#000" stroke-width="1.1" shape-rendering="auto"/>
</svg>
<!-- pause -->
<div class="a" style="left:754px;top:243px;width:2px;height:11px;background:#000"></div>
<div class="a" style="left:759px;top:243px;width:2px;height:11px;background:#000"></div>
<!-- counter x -->
<svg style="left:745px;top:275px" width="26" height="21" shape-rendering="crispEdges">
<path d="M1 12h4v1H1zM1 12h1v6H1zM4 12h1v6H4zM1 17h4v1H1z" fill="#000"/>
<path d="M6 12h4v1H6zM6 12h1v6H6zM9 12h1v6H9zM6 17h4v1H6z" fill="#000"/>
<path d="M11 12h4v1h-4zM11 12h1v6h-1zM14 12h1v6h-1zM11 17h4v1h-4z" fill="#000"/>
<path d="M20 12h4v1h-4zM20 12h1v6h-1zM23 12h1v6h-1zM20 17h4v1h-4z" fill="#000"/>
<path d="M17 10h1v10h-1z" fill="#000"/>
<path d="M7 4h15v1H7zM7 4h1v5H7zM21 4h1v6h-1zM19 8h5v1h-5zM20 9h3v1h-3z" fill="#000"/>
</svg>
<svg style="left:757px;top:275px" width="8" height="8"><path d="M1.5 1.5L6.5 6.5M6.5 1.5L1.5 6.5" stroke="#000" stroke-width="2.2"/></svg>
<!-- pages x -->
<svg style="left:746px;top:314px" width="25" height="25" shape-rendering="crispEdges">
<path d="M3 5h9v1H3zM3 5h1v10H3zM11 5h1v3h-1z" fill="#000"/>
<path d="M6 8h9v1H6zM6 8h1v10H6zM14 8h1v3h-1z" fill="#000"/>
<path d="M9 11h10v1H9zM9 11h1v13H9zM18 11h1v13h-1zM9 23h10v1H9z" fill="#000"/>
<path d="M0 6h3v1H0zM0 8h3v1H0zM0 10h3v1H0zM0 12h3v1H0zM0 14h3v1H0zM0 16h3v1H0z" fill="#000"/>
<path d="M17 19h3v3h-3zM20 20h3v1h-3z" fill="#000"/>
</svg>
<svg style="left:762px;top:313px" width="9" height="9"><path d="M1.5 1.5L7.5 7.5M7.5 1.5L1.5 7.5" stroke="#000" stroke-width="2.4"/></svg>
<!-- connector -->
<svg style="left:744px;top:358px" width="29" height="15" shape-rendering="crispEdges">
<path d="M1 4h14v3H1zM1 9h14v3H1zM8 2h8v12H8z" fill="#000"/>
<path d="M10 1h1v1h-1zM13 1h1v1h-1z" fill="#000"/>
<path d="M16 4h10v1H16zM16 9h10v1H16zM16 13h10v1H16zM25 1h2v14h-2z" fill="#000"/>
<path d="M16 5h2v3h-2zM16 10h2v3h-2z" fill="#888"/>
</svg>
<svg style="left:743px;top:402px" width="32" height="14" shape-rendering="crispEdges"><path d="M1 1h5v1H1z" fill="#000"/><rect x="6" y="1" width="5" height="5" fill="#0000ff"/><path d="M3 7h27v2H3zM12 4h9v7h-9z" fill="#000"/><path d="M13 3h1v1h-1zM16 3h1v1h-1zM19 3h1v1h-1z" fill="#000"/></svg>
<svg style="left:743px;top:441px" width="32" height="14" shape-rendering="crispEdges"><path d="M1 1h5v1H1z" fill="#000"/><rect x="6" y="1" width="5" height="5" fill="#0000ff"/><path d="M3 7h27v2H3zM12 4h9v7h-9z" fill="#000"/><path d="M13 3h1v1h-1zM16 3h1v1h-1zM19 3h1v1h-1z" fill="#000"/></svg>
<svg style="left:743px;top:480px" width="32" height="14" shape-rendering="crispEdges"><path d="M1 1h5v1H1z" fill="#000"/><rect x="6" y="1" width="5" height="5" fill="#0000ff"/><path d="M3 7h27v2H3zM12 4h9v7h-9z" fill="#000"/><path d="M13 3h1v1h-1zM16 3h1v1h-1zM19 3h1v1h-1z" fill="#000"/></svg>

<!-- table side icons -->
<svg style="left:662px;top:373px" width="26" height="24" shape-rendering="crispEdges"><path d="M3 6h1v1h-1zM3 7h1v1h-1zM3 8h1v1h-1zM3 9h1v1h-1zM3 10h1v1h-1zM3 11h1v1h-1zM3 12h1v1h-1zM3 13h1v1h-1zM3 14h1v1h-1zM3 15h1v1h-1zM3 16h1v1h-1zM3 17h1v1h-1zM3 18h1v1h-1zM3 19h1v1h-1zM3 20h1v1h-1zM4 5h1v1h-1zM4 6h1v1h-1zM4 20h1v1h-1zM5 4h1v1h-1zM5 6h1v1h-1zM5 20h1v1h-1zM6 3h1v1h-1zM6 5h1v1h-1zM6 6h1v1h-1zM6 20h1v1h-1zM7 3h1v1h-1zM7 20h1v1h-1zM8 3h1v1h-1zM8 20h1v1h-1zM9 3h1v1h-1zM9 20h1v1h-1zM10 3h1v1h-1zM10 20h1v1h-1zM11 3h1v1h-1zM11 20h1v1h-1zM12 3h1v1h-1zM12 20h1v1h-1zM13 3h1v1h-1zM13 9h1v1h-1zM13 13h1v1h-1zM13 16h1v1h-1zM13 20h1v1h-1zM14 3h1v1h-1zM14 8h1v1h-1zM14 10h1v1h-1zM14 11h1v1h-1zM14 12h1v1h-1zM14 14h1v1h-1zM14 15h1v1h-1zM14 17h1v1h-1zM14 20h1v1h-1zM15 3h1v1h-1zM15 9h1v1h-1zM15 12h1v1h-1zM15 16h1v1h-1zM15 20h1v1h-1zM16 3h1v1h-1zM16 4h1v1h-1zM16 5h1v1h-1zM16 6h1v1h-1zM16 7h1v1h-1zM16 8h1v1h-1zM16 9h1v1h-1zM16 16h1v1h-1zM16 17h1v1h-1zM16 18h1v1h-1zM16 19h1v1h-1zM16 20h1v1h-1zM17 9h1v1h-1zM17 15h1v1h-1zM18 9h1v1h-1zM18 10h1v1h-1zM18 17h1v1h-1zM18 18h1v1h-1zM19 9h1v1h-1zM19 16h1v1h-1zM20 9h1v1h-1zM20 13h1v1h-1zM20 16h1v1h-1zM21 8h1v1h-1zM21 10h1v1h-1zM21 11h1v1h-1zM21 13h1v1h-1zM21 14h1v1h-1zM21 15h1v1h-1zM21 17h1v1h-1zM22 9h1v1h-1zM22 12h1v1h-1zM22 16h1v1h-1z" fill="#000"/></svg>
<svg style="left:694px;top:374px" width="26" height="24" shape-rendering="crispEdges"><path d="M1 4h1v1h-1zM2 3h1v1h-1zM2 5h1v1h-1zM3 2h1v1h-1zM3 6h1v1h-1zM3 8h1v1h-1zM3 9h1v1h-1zM4 1h1v1h-1zM4 7h1v1h-1zM4 9h1v1h-1zM5 2h1v1h-1zM5 8h1v1h-1zM5 9h1v1h-1zM5 10h1v1h-1zM5 11h1v1h-1zM5 12h1v1h-1zM5 13h1v1h-1zM5 14h1v1h-1zM5 15h1v1h-1zM5 16h1v1h-1zM5 17h1v1h-1zM5 18h1v1h-1zM6 3h1v1h-1zM6 9h1v1h-1zM6 19h1v1h-1zM7 4h1v1h-1zM7 9h1v1h-1zM7 10h1v1h-1zM7 11h1v1h-1zM7 12h1v1h-1zM7 19h1v1h-1zM8 2h1v1h-1zM8 5h1v1h-1zM8 9h1v1h-1zM8 13h1v1h-1zM8 19h1v1h-1zM9 2h1v1h-1zM9 3h1v1h-1zM9 4h1v1h-1zM9 5h1v1h-1zM9 6h1v1h-1zM9 7h1v1h-1zM9 8h1v1h-1zM9 9h1v1h-1zM9 13h1v1h-1zM9 16h1v1h-1zM9 17h1v1h-1zM9 18h1v1h-1zM9 19h1v1h-1zM10 5h1v1h-1zM10 13h1v1h-1zM10 15h1v1h-1zM10 19h1v1h-1zM11 5h1v1h-1zM11 13h1v1h-1zM11 15h1v1h-1zM11 19h1v1h-1zM12 5h1v1h-1zM12 13h1v1h-1zM12 15h1v1h-1zM12 16h1v1h-1zM12 17h1v1h-1zM12 18h1v1h-1zM12 19h1v1h-1zM13 5h1v1h-1zM13 13h1v1h-1zM13 15h1v1h-1zM13 16h1v1h-1zM13 17h1v1h-1zM13 18h1v1h-1zM13 19h1v1h-1zM14 5h1v1h-1zM14 13h1v1h-1zM14 15h1v1h-1zM14 19h1v1h-1zM15 5h1v1h-1zM15 13h1v1h-1zM15 15h1v1h-1zM15 19h1v1h-1zM16 5h1v1h-1zM16 13h1v1h-1zM16 16h1v1h-1zM16 17h1v1h-1zM16 18h1v1h-1zM16 19h1v1h-1zM17 5h1v1h-1zM17 13h1v1h-1zM17 19h1v1h-1zM18 5h1v1h-1zM18 6h1v1h-1zM18 7h1v1h-1zM18 8h1v1h-1zM18 9h1v1h-1zM18 10h1v1h-1zM18 11h1v1h-1zM18 12h1v1h-1zM18 19h1v1h-1zM19 5h1v1h-1zM19 19h1v1h-1zM20 6h1v1h-1zM20 7h1v1h-1zM20 8h1v1h-1zM20 9h1v1h-1zM20 10h1v1h-1zM20 11h1v1h-1zM20 12h1v1h-1zM20 13h1v1h-1zM20 14h1v1h-1zM20 15h1v1h-1zM20 16h1v1h-1zM20 17h1v1h-1zM20 18h1v1h-1z" fill="#000"/></svg>
<svg style="left:665px;top:405px" width="26" height="24" shape-rendering="crispEdges"><path d="M0 5h1v1h-1zM0 6h1v1h-1zM0 7h1v1h-1zM0 8h1v1h-1zM1 5h1v1h-1zM1 9h1v1h-1zM1 10h1v1h-1zM1 11h1v1h-1zM2 3h1v1h-1zM2 4h1v1h-1zM2 5h1v1h-1zM2 12h1v1h-1zM3 2h1v1h-1zM3 5h1v1h-1zM3 13h1v1h-1zM4 2h1v1h-1zM4 5h1v1h-1zM4 13h1v1h-1zM5 2h1v1h-1zM5 5h1v1h-1zM5 13h1v1h-1zM6 2h1v1h-1zM6 5h1v1h-1zM6 13h1v1h-1zM7 2h1v1h-1zM7 5h1v1h-1zM7 13h1v1h-1zM8 2h1v1h-1zM8 5h1v1h-1zM8 13h1v1h-1zM9 2h1v1h-1zM9 5h1v1h-1zM9 13h1v1h-1zM10 1h1v1h-1zM10 5h1v1h-1zM10 13h1v1h-1zM11 0h1v1h-1zM11 5h1v1h-1zM11 13h1v1h-1zM12 0h1v1h-1zM12 5h1v1h-1zM12 13h1v1h-1zM13 0h1v1h-1zM13 5h1v1h-1zM13 13h1v1h-1zM14 0h1v1h-1zM14 5h1v1h-1zM14 13h1v1h-1zM15 0h1v1h-1zM15 5h1v1h-1zM15 13h1v1h-1zM16 0h1v1h-1zM16 5h1v1h-1zM16 13h1v1h-1zM17 0h1v1h-1zM17 4h1v1h-1zM17 6h1v1h-1zM17 7h1v1h-1zM17 8h1v1h-1zM17 9h1v1h-1zM17 10h1v1h-1zM17 11h1v1h-1zM17 12h1v1h-1zM17 13h1v1h-1zM18 0h1v1h-1zM18 4h1v1h-1zM18 13h1v1h-1zM19 1h1v1h-1zM19 2h1v1h-1zM19 3h1v1h-1zM19 4h1v1h-1zM19 5h1v1h-1zM19 6h1v1h-1zM19 7h1v1h-1zM19 8h1v1h-1zM19 9h1v1h-1zM19 10h1v1h-1zM19 11h1v1h-1zM19 12h1v1h-1z" fill="#000"/></svg>
<svg style="left:694px;top:409px" width="8" height="4"><path d="M0 0H7.5L3.75 4Z" fill="#000"/></svg>
<svg style="left:668px;top:428px" width="26" height="24" shape-rendering="crispEdges"><path d="M0 3h1v1h-1zM0 4h1v1h-1zM0 5h1v1h-1zM0 6h1v1h-1zM0 7h1v1h-1zM0 8h1v1h-1zM0 9h1v1h-1zM0 10h1v1h-1zM0 11h1v1h-1zM0 12h1v1h-1zM0 13h1v1h-1zM0 14h1v1h-1zM0 15h1v1h-1zM0 16h1v1h-1zM0 17h1v1h-1zM1 2h1v1h-1zM1 3h1v1h-1zM1 17h1v1h-1zM2 1h1v1h-1zM2 3h1v1h-1zM2 17h1v1h-1zM3 0h1v1h-1zM3 1h1v1h-1zM3 2h1v1h-1zM3 3h1v1h-1zM3 17h1v1h-1zM4 0h1v1h-1zM4 17h1v1h-1zM5 0h1v1h-1zM5 17h1v1h-1zM6 0h1v1h-1zM6 17h1v1h-1zM7 0h1v1h-1zM7 17h1v1h-1zM8 0h1v1h-1zM8 17h1v1h-1zM9 0h1v1h-1zM9 17h1v1h-1zM10 0h1v1h-1zM10 17h1v1h-1zM11 0h1v1h-1zM11 17h1v1h-1zM12 0h1v1h-1zM12 1h1v1h-1zM12 2h1v1h-1zM12 3h1v1h-1zM12 4h1v1h-1zM12 5h1v1h-1zM12 6h1v1h-1zM12 7h1v1h-1zM12 8h1v1h-1zM12 9h1v1h-1zM12 10h1v1h-1zM12 11h1v1h-1zM12 12h1v1h-1zM12 13h1v1h-1zM12 14h1v1h-1zM12 15h1v1h-1zM12 16h1v1h-1zM12 17h1v1h-1z" fill="#000"/></svg>
<!-- log side icons -->
<svg style="left:694px;top:470px" width="26" height="24" shape-rendering="crispEdges"><path d="M3 6h1v1h-1zM3 7h1v1h-1zM3 8h1v1h-1zM3 9h1v1h-1zM3 10h1v1h-1zM3 11h1v1h-1zM3 12h1v1h-1zM3 13h1v1h-1zM3 14h1v1h-1zM3 15h1v1h-1zM3 16h1v1h-1zM3 17h1v1h-1zM3 18h1v1h-1zM3 19h1v1h-1zM3 20h1v1h-1zM4 5h1v1h-1zM4 6h1v1h-1zM4 20h1v1h-1zM5 4h1v1h-1zM5 6h1v1h-1zM5 20h1v1h-1zM6 3h1v1h-1zM6 5h1v1h-1zM6 6h1v1h-1zM6 20h1v1h-1zM7 3h1v1h-1zM7 20h1v1h-1zM8 3h1v1h-1zM8 20h1v1h-1zM9 3h1v1h-1zM9 20h1v1h-1zM10 3h1v1h-1zM10 20h1v1h-1zM11 3h1v1h-1zM11 20h1v1h-1zM12 3h1v1h-1zM12 20h1v1h-1zM13 3h1v1h-1zM13 9h1v1h-1zM13 13h1v1h-1zM13 16h1v1h-1zM13 20h1v1h-1zM14 3h1v1h-1zM14 8h1v1h-1zM14 10h1v1h-1zM14 11h1v1h-1zM14 12h1v1h-1zM14 14h1v1h-1zM14 15h1v1h-1zM14 17h1v1h-1zM14 20h1v1h-1zM15 3h1v1h-1zM15 9h1v1h-1zM15 12h1v1h-1zM15 16h1v1h-1zM15 20h1v1h-1zM16 3h1v1h-1zM16 4h1v1h-1zM16 5h1v1h-1zM16 6h1v1h-1zM16 7h1v1h-1zM16 8h1v1h-1zM16 9h1v1h-1zM16 16h1v1h-1zM16 17h1v1h-1zM16 18h1v1h-1zM16 19h1v1h-1zM16 20h1v1h-1zM17 9h1v1h-1zM17 15h1v1h-1zM18 9h1v1h-1zM18 10h1v1h-1zM18 17h1v1h-1zM18 18h1v1h-1zM19 9h1v1h-1zM19 16h1v1h-1zM20 9h1v1h-1zM20 13h1v1h-1zM20 16h1v1h-1zM21 8h1v1h-1zM21 10h1v1h-1zM21 11h1v1h-1zM21 13h1v1h-1zM21 14h1v1h-1zM21 15h1v1h-1zM21 17h1v1h-1zM22 9h1v1h-1zM22 12h1v1h-1zM22 16h1v1h-1z" fill="#000"/></svg>
<svg style="left:697px;top:501px" width="26" height="24" shape-rendering="crispEdges"><path d="M1 1h1v1h-1zM1 2h1v1h-1zM1 3h1v1h-1zM1 4h1v1h-1zM1 5h1v1h-1zM1 6h1v1h-1zM1 7h1v1h-1zM1 8h1v1h-1zM1 9h1v1h-1zM1 10h1v1h-1zM1 11h1v1h-1zM1 12h1v1h-1zM1 13h1v1h-1zM1 14h1v1h-1zM1 15h1v1h-1zM2 1h1v1h-1zM2 15h1v1h-1zM3 1h1v1h-1zM3 2h1v1h-1zM3 3h1v1h-1zM3 4h1v1h-1zM3 5h1v1h-1zM3 6h1v1h-1zM3 7h1v1h-1zM3 8h1v1h-1zM3 9h1v1h-1zM3 15h1v1h-1zM4 1h1v1h-1zM4 9h1v1h-1zM4 15h1v1h-1zM5 1h1v1h-1zM5 9h1v1h-1zM5 12h1v1h-1zM5 13h1v1h-1zM5 14h1v1h-1zM5 15h1v1h-1zM6 1h1v1h-1zM6 9h1v1h-1zM6 11h1v1h-1zM6 15h1v1h-1zM7 1h1v1h-1zM7 9h1v1h-1zM7 11h1v1h-1zM7 15h1v1h-1zM8 1h1v1h-1zM8 9h1v1h-1zM8 11h1v1h-1zM8 12h1v1h-1zM8 13h1v1h-1zM8 14h1v1h-1zM8 15h1v1h-1zM9 1h1v1h-1zM9 9h1v1h-1zM9 11h1v1h-1zM9 12h1v1h-1zM9 13h1v1h-1zM9 14h1v1h-1zM9 15h1v1h-1zM10 1h1v1h-1zM10 9h1v1h-1zM10 11h1v1h-1zM10 15h1v1h-1zM11 1h1v1h-1zM11 9h1v1h-1zM11 11h1v1h-1zM11 15h1v1h-1zM12 1h1v1h-1zM12 9h1v1h-1zM12 12h1v1h-1zM12 13h1v1h-1zM12 14h1v1h-1zM12 15h1v1h-1zM13 1h1v1h-1zM13 9h1v1h-1zM13 15h1v1h-1zM14 1h1v1h-1zM14 2h1v1h-1zM14 3h1v1h-1zM14 4h1v1h-1zM14 5h1v1h-1zM14 6h1v1h-1zM14 7h1v1h-1zM14 8h1v1h-1zM14 9h1v1h-1zM14 15h1v1h-1zM15 1h1v1h-1zM15 15h1v1h-1zM16 2h1v1h-1zM16 3h1v1h-1zM16 4h1v1h-1zM16 5h1v1h-1zM16 6h1v1h-1zM16 7h1v1h-1zM16 8h1v1h-1zM16 9h1v1h-1zM16 10h1v1h-1zM16 11h1v1h-1zM16 12h1v1h-1zM16 13h1v1h-1zM16 14h1v1h-1z" fill="#000"/></svg>
<div class="a" style="left:703px;top:531px;width:2px;height:11px;background:#000"></div>
<div class="a" style="left:708px;top:531px;width:2px;height:11px;background:#000"></div>
<svg style="left:696px;top:552px" width="26" height="24" shape-rendering="crispEdges"><path d="M1 4h1v1h-1zM2 3h1v1h-1zM2 5h1v1h-1zM3 2h1v1h-1zM3 6h1v1h-1zM3 8h1v1h-1zM3 9h1v1h-1zM4 1h1v1h-1zM4 7h1v1h-1zM4 9h1v1h-1zM5 2h1v1h-1zM5 8h1v1h-1zM5 9h1v1h-1zM5 10h1v1h-1zM5 11h1v1h-1zM5 12h1v1h-1zM5 13h1v1h-1zM5 14h1v1h-1zM5 15h1v1h-1zM5 16h1v1h-1zM5 17h1v1h-1zM5 18h1v1h-1zM6 3h1v1h-1zM6 9h1v1h-1zM6 19h1v1h-1zM7 4h1v1h-1zM7 9h1v1h-1zM7 10h1v1h-1zM7 11h1v1h-1zM7 12h1v1h-1zM7 19h1v1h-1zM8 2h1v1h-1zM8 5h1v1h-1zM8 9h1v1h-1zM8 13h1v1h-1zM8 19h1v1h-1zM9 2h1v1h-1zM9 3h1v1h-1zM9 4h1v1h-1zM9 5h1v1h-1zM9 6h1v1h-1zM9 7h1v1h-1zM9 8h1v1h-1zM9 9h1v1h-1zM9 13h1v1h-1zM9 16h1v1h-1zM9 17h1v1h-1zM9 18h1v1h-1zM9 19h1v1h-1zM10 5h1v1h-1zM10 13h1v1h-1zM10 15h1v1h-1zM10 19h1v1h-1zM11 5h1v1h-1zM11 13h1v1h-1zM11 15h1v1h-1zM11 19h1v1h-1zM12 5h1v1h-1zM12 13h1v1h-1zM12 15h1v1h-1zM12 16h1v1h-1zM12 17h1v1h-1zM12 18h1v1h-1zM12 19h1v1h-1zM13 5h1v1h-1zM13 13h1v1h-1zM13 15h1v1h-1zM13 16h1v1h-1zM13 17h1v1h-1zM13 18h1v1h-1zM13 19h1v1h-1zM14 5h1v1h-1zM14 13h1v1h-1zM14 15h1v1h-1zM14 19h1v1h-1zM15 5h1v1h-1zM15 13h1v1h-1zM15 15h1v1h-1zM15 19h1v1h-1zM16 5h1v1h-1zM16 13h1v1h-1zM16 16h1v1h-1zM16 17h1v1h-1zM16 18h1v1h-1zM16 19h1v1h-1zM17 5h1v1h-1zM17 13h1v1h-1zM17 19h1v1h-1zM18 5h1v1h-1zM18 6h1v1h-1zM18 7h1v1h-1zM18 8h1v1h-1zM18 9h1v1h-1zM18 10h1v1h-1zM18 11h1v1h-1zM18 12h1v1h-1zM18 19h1v1h-1zM19 5h1v1h-1zM19 19h1v1h-1zM20 6h1v1h-1zM20 7h1v1h-1zM20 8h1v1h-1zM20 9h1v1h-1zM20 10h1v1h-1zM20 11h1v1h-1zM20 12h1v1h-1zM20 13h1v1h-1zM20 14h1v1h-1zM20 15h1v1h-1zM20 16h1v1h-1zM20 17h1v1h-1zM20 18h1v1h-1z" fill="#000"/></svg>
<!-- slider ticks & thumb -->
<div class="a" style="left:688px;top:480px;width:4px;height:1px;background:#000"></div>
<div class="a" style="left:688px;top:512px;width:4px;height:1px;background:#000"></div>
<div class="a" style="left:688px;top:544px;width:4px;height:1px;background:#000"></div>
<div class="a" style="left:688px;top:575px;width:4px;height:1px;background:#000"></div>
<div class="a" style="left:688px;top:607px;width:4px;height:1px;background:#000"></div>
<svg style="left:667px;top:540px" width="21" height="11"><path d="M0.5 1.5H15.5L19.5 5.5 15.5 9.5H0.5Z" fill="#ececec" stroke="#fff" stroke-width="1"/><path d="M0.5 9.5H15.5L19.5 5.5" fill="none" stroke="#696969" stroke-width="1.2"/></svg>
<!-- scroll arrows -->
<svg style="left:707px;top:214px" width="10" height="6"><path d="M0.5 5.5H9.5L5 0.5Z" fill="#000"/></svg>
<svg style="left:707px;top:355px" width="10" height="6"><path d="M0.5 0.5H9.5L5 5.5Z" fill="#000"/></svg>
<svg style="left:648px;top:397px" width="8" height="5"><path d="M0 4H7.5L3.75 0Z" fill="#000"/></svg>
<svg style="left:648px;top:446px" width="8" height="5"><path d="M0 0H7.5L3.75 4Z" fill="#000"/></svg>
<svg style="left:652px;top:476px" width="8" height="5"><path d="M0 4H7L3.5 0Z" fill="#444"/></svg>
<svg style="left:652px;top:590px" width="8" height="5"><path d="M0 0H7L3.5 4Z" fill="#444"/></svg>
<svg style="left:21px;top:606px" width="5" height="8"><path d="M4 0V7L0 3.5Z" fill="#444"/></svg>
<svg style="left:635px;top:606px" width="5" height="8"><path d="M0 0V7L4 3.5Z" fill="#444"/></svg>
</body></html>
